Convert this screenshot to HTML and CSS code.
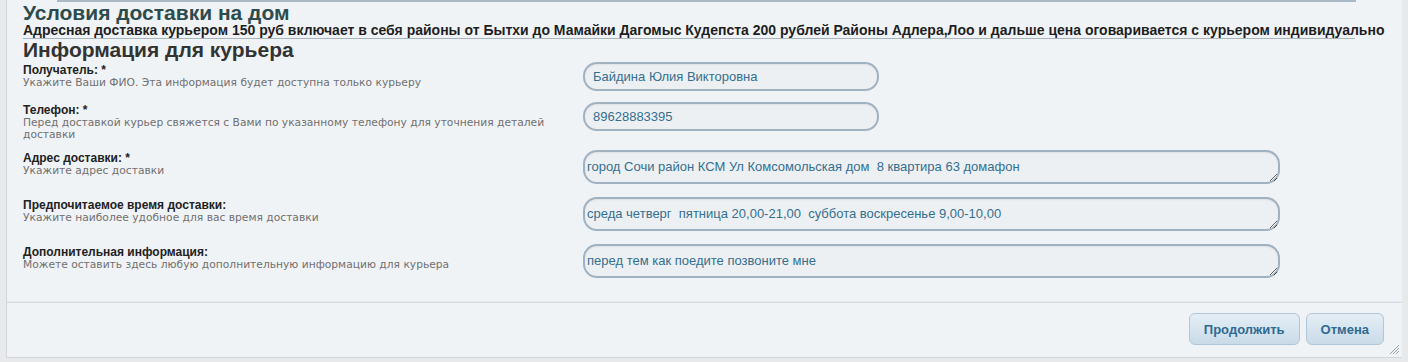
FILE: index.html
```html
<!DOCTYPE html>
<html>

<head>
    <title>Оформление заказа</title>
    <link rel="stylesheet" href="styles.css">
</head>

<body>

    <div class="dialog">
        <div class="top-bar"></div>

        <div class="content">
            <h2 class="delivery-title">Условия доставки на дом</h2>
            <p class="delivery-note">Адресная доставка курьером 150 руб включает в себя районы от Бытхи до Мамайки Дагомыс Кудепста 200 рублей Районы Адлера,Лоо и дальше цена оговаривается с курьером индивидуально</p>

            <h2 class="courier-title">Информация для курьера</h2>

            <div class="field-row">
                <div class="field-label">
                    <label for="recipient">Получатель: *</label>
                    <div class="hint">Укажите Ваши ФИО. Эта информация будет доступна только курьеру</div>
                </div>
                <input type="text" id="recipient" class="pill-input" value="Байдина Юлия Викторовна">
            </div>

            <div class="field-row">
                <div class="field-label">
                    <label for="phone">Телефон: *</label>
                    <div class="hint">Перед доставкой курьер свяжется с Вами по указанному телефону для уточнения деталей доставки</div>
                </div>
                <input type="text" id="phone" class="pill-input" value="89628883395">
            </div>

            <div class="field-row">
                <div class="field-label">
                    <label for="address">Адрес доставки: *</label>
                    <div class="hint">Укажите адрес доставки</div>
                </div>
                <textarea id="address" class="area-input" spellcheck="false">город Сочи район КСМ Ул Комсомольская дом  8 квартира 63 домафон</textarea>
            </div>

            <div class="field-row">
                <div class="field-label">
                    <label for="time">Предпочитаемое время доставки:</label>
                    <div class="hint">Укажите наиболее удобное для вас время доставки</div>
                </div>
                <textarea id="time" class="area-input" spellcheck="false">среда четверг  пятница 20,00-21,00  суббота воскресенье 9,00-10,00</textarea>
            </div>

            <div class="field-row">
                <div class="field-label">
                    <label for="extra">Дополнительная информация:</label>
                    <div class="hint">Можете оставить здесь любую дополнительную информацию для курьера</div>
                </div>
                <textarea id="extra" class="area-input" spellcheck="false">перед тем как поедите позвоните мне</textarea>
            </div>
        </div>

        <div class="button-bar">
            <button class="btn">Продолжить</button>
            <button class="btn">Отмена</button>
        </div>

        <svg class="grip" width="12" height="12" viewBox="0 0 12 12">
            <path d="M11 2 L2 11 M11 5 L5 11 M11 8 L8 11" stroke="#9aa4ad" stroke-width="1" fill="none"/>
        </svg>
    </div>

</body>
</html>
```

FILE: styles.css
```css
body {
    margin: 0;
    background-color: #e8e9ea;
    font-family: "Liberation Sans", Arial, sans-serif;
}

.dialog {
    position: relative;
    margin-left: 6px;
    width: 1395px;
    height: 357px;
    background-color: #f0f3f6;
    border-left: 1px solid #d2d6da;
    border-bottom: 1px solid #d2d6da;
}

.top-bar {
    height: 2px;
    margin: 0 46px 0 50px;
    background-color: #a9b9c8;
}

.content {
    padding: 0 0 0 16px;
}

.delivery-title {
    margin: 0;
    font-size: 21px;
    line-height: 21px;
    color: #2c4b4d;
}

.delivery-note {
    margin: 0;
    width: 1332px;
    font-size: 14px;
    font-weight: bold;
    line-height: 15px;
    color: #1e1e1e;
    white-space: nowrap;
    border-bottom: 1px solid #a8b4be;
}

.courier-title {
    margin: 0 0 2px;
    font-size: 21px;
    line-height: 21px;
    color: #333;
}

.field-row {
    display: flex;
    align-items: flex-start;
    margin-bottom: 10px;
}

.field-label {
    width: 530px;
    margin-right: 30px;
    padding-top: 1px;
}

.field-label label {
    display: block;
    font-size: 12px;
    font-weight: bold;
    line-height: 14px;
    color: #222;
}

.hint {
    font-family: "DejaVu Sans", Verdana, sans-serif;
    font-size: 10.7px;
    line-height: 11.5px;
    color: #707070;
}

.pill-input,
.area-input {
    box-sizing: border-box;
    border: 2px solid #9fb2c2;
    background-color: #edf0f3;
    font-family: "Liberation Sans", Arial, sans-serif;
    font-size: 13px;
    color: #346f90;
    box-shadow: inset 0 1px 2px rgba(0, 0, 0, 0.06);
}

.pill-input {
    width: 296px;
    height: 29px;
    margin-bottom: 1px;
    padding: 0 8px;
    border-radius: 14px;
}

.area-input {
    width: 697px;
    height: 34px;
    margin-bottom: 3px;
    padding: 7px 2px;
    border-radius: 14px;
    resize: vertical;
    overflow: hidden;
    line-height: 16px;
}

.button-bar {
    display: flex;
    justify-content: flex-end;
    gap: 6px;
    margin-top: 21px;
    padding: 10px 18px 0 0;
    border-top: 1px solid #d5dbe1;
    box-shadow: 0 -1px 0 #e6eaee;
}

.btn {
    height: 32px;
    padding: 0 14px;
    border: 1px solid #b1c6d6;
    border-radius: 6px;
    background: linear-gradient(#e4eef6, #c9dbe8);
    font-family: "Liberation Sans", Arial, sans-serif;
    font-size: 13px;
    font-weight: bold;
    color: #2f6a91;
    cursor: pointer;
}

.grip {
    position: absolute;
    right: 2px;
    bottom: 2px;
}
```
